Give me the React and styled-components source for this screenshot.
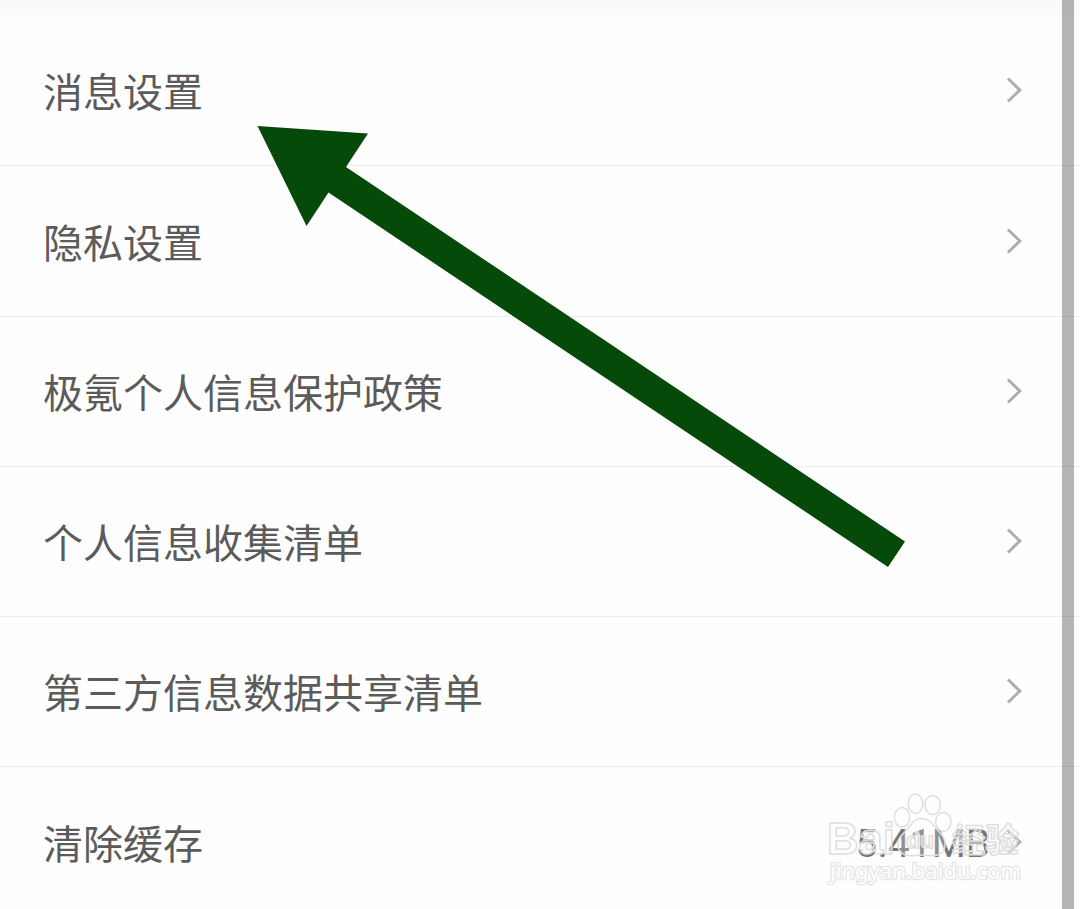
import React from "react";
import styled, { createGlobalStyle } from "styled-components";

const settings = [
  { label: "消息设置", height: 151 },
  { label: "隐私设置", height: 151 },
  { label: "极氪个人信息保护政策", height: 150 },
  { label: "个人信息收集清单", height: 150 },
  { label: "第三方信息数据共享清单", height: 150 },
  { label: "清除缓存", height: 151, value: "5.41MB" },
];

export default function App() {
  return (
    <Screen>
      <GlobalStyle />
      <TopGap />
      <List>
        {settings.map((item) => (
          <Row key={item.label} $height={item.height}>
            <Label>{item.label}</Label>
            {item.value && <Value>{item.value}</Value>}
            <Chevron />
          </Row>
        ))}
      </List>
      <Arrow />
      <Watermark />
      <ScrollBar />
    </Screen>
  );
}

function Chevron() {
  return (
    <ChevronIcon viewBox="0 0 16 26">
      <path d="M2 1.5 L13.8 13 L2 24.5" />
    </ChevronIcon>
  );
}

function Arrow() {
  return (
    <Overlay viewBox="0 0 1080 909">
      <polygon
        fill="#064a0a"
        points="257.5,126 368,133.5 346,167 905,541.5 888,567 328.5,192.5 306.5,226"
      />
    </Overlay>
  );
}

function Watermark() {
  return (
    <Mark viewBox="0 0 210 100">
      {/* paw */}
      <ellipse cx="95.5" cy="13.7" rx="7.3" ry="9.8" />
      <ellipse cx="112.6" cy="15" rx="7.8" ry="9.5" />
      <ellipse cx="82" cy="27.3" rx="7.7" ry="9.7" />
      <ellipse cx="123.3" cy="31.8" rx="7.7" ry="9.5" />
      <path d="M102 28.5 C111 28.5 114 37 120 43 C128 51 127 64 115 65.5 C108 66 102 64 95 65.5 C82 67 75 60 79 49 C83 43 89 38 92 33 C95 29.5 98 28.5 102 28.5Z" />
      {/* wordmark */}
      <text x="7" y="64" fontSize="45" fontWeight="700" textLength="68" lengthAdjust="spacingAndGlyphs">
        Bai
      </text>
      <text x="86" y="58" fontSize="22" fontWeight="700" textLength="28" lengthAdjust="spacingAndGlyphs">
        du
      </text>
      <text x="132" y="62" fontSize="33.5" fontWeight="700">
        经验
      </text>
      <SiteText x="10" y="89" fontSize="22" textLength="191" lengthAdjust="spacingAndGlyphs">
        jingyan.baidu.com
      </SiteText>
    </Mark>
  );
}

const GlobalStyle = createGlobalStyle`
  * {
    box-sizing: border-box;
  }
  body {
    margin: 0;
    background: #fefefe;
    font-family: "Noto Sans CJK SC", sans-serif;
    overflow: hidden;
  }
`;

const Screen = styled.main`
  position: relative;
  width: 1080px;
  height: 909px;
  overflow: hidden;
`;

const TopGap = styled.div`
  height: 15px;
  background: #fafafa;
`;

const List = styled.div`
  display: flex;
  flex-direction: column;
`;

const Row = styled.div`
  display: flex;
  align-items: center;
  flex-shrink: 0;
  height: ${(props) => props.$height}px;
  padding: 0 58px ${(props) => (props.$height === 150 ? 1 : 0)}px 43px;
  border-bottom: 1px solid #ededed;
`;

const Label = styled.span`
  flex: 1;
  color: #5b5b5b;
  font-size: 40px;
  font-weight: 400;
  line-height: 60px;
`;

const Value = styled.span`
  margin-right: 16px;
  padding-top: 3px;
  color: #757575;
  font-family: Roboto, sans-serif;
  font-size: 39px;
  line-height: 60px;
`;

const ChevronIcon = styled.svg`
  width: 16px;
  height: 26px;
  fill: none;
  stroke: #a8aeb2;
  stroke-width: 3;
`;

const Overlay = styled.svg`
  position: absolute;
  top: 0;
  left: 0;
  width: 1080px;
  height: 909px;
  pointer-events: none;
`;

const Mark = styled.svg`
  position: absolute;
  left: 820px;
  top: 790px;
  width: 210px;
  height: 100px;
  fill: rgba(255, 255, 255, 0.2);
  stroke: #dfdfdf;
  stroke-width: 1.5;
  pointer-events: none;

  text {
    font-family: "Liberation Sans", "Noto Sans CJK SC", sans-serif;
    fill: rgba(255, 255, 255, 0.45);
  }
`;

const SiteText = styled.text`
  && {
    font-family: "Noto Sans", sans-serif;
    font-weight: 400;
    fill: #fefefe;
    stroke: #e6e6e6;
    stroke-width: 2.6;
    paint-order: stroke;
  }
`;

const ScrollBar = styled.div`
  position: absolute;
  top: 0;
  left: 1062px;
  width: 12px;
  height: 909px;
  background: rgba(0, 0, 0, 0.285);
`;
